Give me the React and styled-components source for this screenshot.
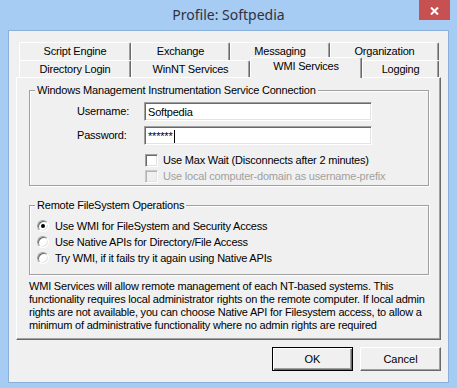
import React from 'react';
import styled, { createGlobalStyle, css } from 'styled-components';

const GlobalStyle = createGlobalStyle`
  html, body { margin: 0; padding: 0; background: #a7ccf4; }
  body {
    font-family: "Liberation Sans", Arial, sans-serif;
    font-size: 11px;
    color: #000;
  }
  * { box-sizing: border-box; }
`;

const Window = styled.div`
  width: 457px;
  height: 388px;
  background: #a7ccf4;
  display: flex;
  flex-direction: column;
  overflow: hidden;
`;

const TitleBar = styled.div`
  height: 30px;
  flex: none;
  display: grid;
  grid-template-columns: 1fr auto 1fr;
  align-items: center;
`;

const Title = styled.div`
  grid-column: 2;
  font-family: "Noto Sans", "Open Sans", sans-serif;
  font-size: 14px;
  color: #303040;
  line-height: 30px;
`;

const CloseButton = styled.div`
  grid-column: 3;
  justify-self: end;
  align-self: start;
  width: 31px;
  height: 20px;
  margin-right: 7px;
  background: #c75050;
  display: flex;
  align-items: center;
  justify-content: center;
  padding-top: 2px;
`;

const Client = styled.div`
  margin: 0 8px;
  height: 353px;
  border: 1px solid #8aafd9;
  background: #f0f0f0;
  padding: 11px 0 0 7px;
  display: flex;
  flex-direction: column;
`;

const TabStrip = styled.div`
  display: flex;
  flex-direction: column;
  padding-left: 3px;
`;

const TabRow = styled.div`
  display: flex;
  height: ${p => p.$h}px;
`;

const Tab = styled.div`
  width: ${p => p.$w}px;
  height: 100%;
  border-top: 1px solid #fff;
  border-left: 1px solid #fff;
  border-right: 1px solid #696969;
  box-shadow: inset -1px 0 #a0a0a0;
  border-radius: 2px 2px 0 0;
  text-align: center;
  line-height: 16px;
  white-space: nowrap;
  background: #f0f0f0;
  letter-spacing: -0.2px;
  ${p => p.$active && css`
    position: relative;
    z-index: 1;
    margin-top: -3px;
    height: calc(100% + 4px);
    line-height: 17px;
  `}
`;

const Panel = styled.div`
  width: 425px;
  height: 263px;
  border: 1px solid;
  border-color: #fff #696969 #696969 #fff;
  box-shadow: inset -1px -1px #a0a0a0;
  padding: 6px 11px 0 12px;
  display: flex;
  flex-direction: column;
`;

const Group = styled.fieldset`
  margin: ${p => p.$mt || 0}px 0 0 0;
  padding: 0;
  min-width: 0;
  border: 1px solid #a0a0a0;
  box-shadow: inset 1px 1px #fff, 1px 1px #fff;
`;

const Legend = styled.legend`
  margin-left: 5px;
  padding: 0 2px;
  line-height: 13px;
  background: #f0f0f0;
  letter-spacing: -0.2px;
`;

const ConnectionBody = styled.div`
  padding: 5px 0 1px 47px;
  display: flex;
  flex-direction: column;
`;

const FieldRow = styled.div`
  display: flex;
  align-items: flex-start;
  height: 19px;
  margin-bottom: ${p => p.$mb || 0}px;
`;

const Label = styled.div`
  width: 67px;
  padding-top: 3px;
  letter-spacing: -0.2px;
`;

const TextBox = styled.div`
  width: 228px;
  height: 19px;
  background: #fff;
  border: 1px solid;
  border-color: #a0a0a0 #fff #fff #a0a0a0;
  box-shadow: inset 1px 1px #696969, inset -1px -1px #e3e3e3;
  padding: 3px 0 0 3px;
  line-height: 13px;
  display: flex;
  align-items: flex-start;
  white-space: nowrap;
  letter-spacing: -0.2px;
`;

const Caret = styled.span`
  display: inline-block;
  width: 1px;
  height: 13px;
  background: #000;
  margin-left: 1px;
`;

const CheckRow = styled.div`
  display: flex;
  align-items: center;
  height: 16px;
  padding-left: ${p => p.$indent || 0}px;
  gap: ${p => p.$gap || 5}px;
  color: ${p => (p.$disabled ? '#a0a0a0' : '#000')};
  letter-spacing: -0.2px;
  white-space: nowrap;
`;

const CheckBox = styled.span`
  flex: none;
  width: 13px;
  height: 13px;
  border: 1px solid;
  border-color: #a0a0a0 #fff #fff #a0a0a0;
  box-shadow: inset 1px 1px #696969, inset -1px -1px #e3e3e3;
  background: #fff;
  ${p => p.$disabled && css`
    border-color: #c8c8c8 #fff #fff #c8c8c8;
    box-shadow: inset 1px 1px #b4b4b4, inset -1px -1px #e3e3e3;
    background: #f0f0f0;
  `}
`;

const Radio = styled.span`
  flex: none;
  position: relative;
  width: 12px;
  height: 12px;
  border-radius: 50%;
  border: 1px solid;
  border-color: #a0a0a0 #fff #fff #a0a0a0;
  box-shadow: inset 1px 1px #696969, inset -1px -1px #e3e3e3;
  background: #fff;
  ${p => p.$checked && css`
    &::after {
      content: "";
      position: absolute;
      left: 3px;
      top: 3px;
      width: 4px;
      height: 4px;
      border-radius: 50%;
      background: #000;
    }
  `}
`;

const RadioBody = styled.div`
  padding: 6px 0 8px 7px;
  display: flex;
  flex-direction: column;
`;

const Description = styled.div`
  margin-top: 5px;
  line-height: 13px;
  letter-spacing: -0.2px;
  white-space: nowrap;
`;

const ButtonRow = styled.div`
  display: flex;
  justify-content: flex-end;
  gap: 7px;
  margin-top: 7px;
  padding-right: 7px;
`;

const Button = styled.button`
  width: 81px;
  height: 24px;
  padding: 0;
  font-family: "Liberation Sans", Arial, sans-serif;
  font-size: 11px;
  color: #000;
  background: #f0f0f0;
  border: 1px solid;
  border-color: #fff #696969 #696969 #fff;
  box-shadow: inset -1px -1px #a0a0a0;
  ${p => p.$default && css`
    border-color: #000;
    box-shadow: inset 1px 1px #fff, inset -1px -1px #696969, inset -2px -2px #a0a0a0;
  `}
`;

const row1 = [
  { label: 'Script Engine', w: 112 },
  { label: 'Exchange', w: 99 },
  { label: 'Messaging', w: 100 },
  { label: 'Organization', w: 109 },
];
const row2 = [
  { label: 'Directory Login', w: 112 },
  { label: 'WinNT Services', w: 119 },
  { label: 'WMI Services', w: 112, active: true },
  { label: 'Logging', w: 77 },
];

export default function App() {
  return (
    <>
      <GlobalStyle />
      <Window>
        <TitleBar>
          <Title>Profile: Softpedia</Title>
          <CloseButton>
            <svg width="9" height="8" viewBox="0 0 9 8">
              <path d="M1 0.5 L8 7.5 M8 0.5 L1 7.5" stroke="#fff" strokeWidth="2" fill="none" />
            </svg>
          </CloseButton>
        </TitleBar>
        <Client>
          <TabStrip>
            <TabRow $h={18}>
              {row1.map(t => (
                <Tab key={t.label} $w={t.w}>{t.label}</Tab>
              ))}
            </TabRow>
            <TabRow $h={17}>
              {row2.map(t => (
                <Tab key={t.label} $w={t.w} $active={t.active}>{t.label}</Tab>
              ))}
            </TabRow>
          </TabStrip>
          <Panel>
            <Group>
              <Legend>Windows Management Instrumentation Service Connection</Legend>
              <ConnectionBody>
                <FieldRow $mb={5}>
                  <Label>Username:</Label>
                  <TextBox>Softpedia</TextBox>
                </FieldRow>
                <FieldRow $mb={7}>
                  <Label>Password:</Label>
                  <TextBox>******<Caret /></TextBox>
                </FieldRow>
                <CheckRow $indent={68}>
                  <CheckBox />
                  Use Max Wait (Disconnects after 2 minutes)
                </CheckRow>
                <CheckRow $indent={68} $disabled>
                  <CheckBox $disabled />
                  Use local computer-domain as username-prefix
                </CheckRow>
              </ConnectionBody>
            </Group>
            <Group $mt={13}>
              <Legend>Remote FileSystem Operations</Legend>
              <RadioBody>
                <CheckRow $gap={6}>
                  <Radio $checked />
                  Use WMI for FileSystem and Security Access
                </CheckRow>
                <CheckRow $gap={6}>
                  <Radio />
                  Use Native APIs for Directory/File Access
                </CheckRow>
                <CheckRow $gap={6}>
                  <Radio />
                  Try WMI, if it fails try it again using Native APIs
                </CheckRow>
              </RadioBody>
            </Group>
            <Description>
              WMI Services will allow remote management of each NT-based systems. This<br />
              functionality requires local administrator rights on the remote computer. If local admin<br />
              rights are not available, you can choose Native API for Filesystem access, to allow a<br />
              minimum of administrative functionality where no admin rights are required
            </Description>
          </Panel>
          <ButtonRow>
            <Button $default>OK</Button>
            <Button>Cancel</Button>
          </ButtonRow>
        </Client>
      </Window>
    </>
  );
}
